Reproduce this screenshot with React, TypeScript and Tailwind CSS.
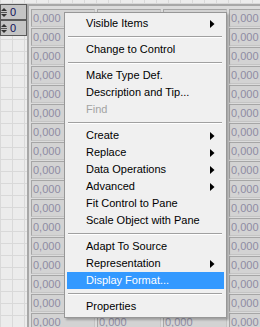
import React from "react";

type Item =
  | { kind: "item"; label: string; sub?: boolean; disabled?: boolean; active?: boolean }
  | { kind: "sep" };

const menu: Item[] = [
  { kind: "item", label: "Visible Items", sub: true },
  { kind: "sep" },
  { kind: "item", label: "Change to Control" },
  { kind: "sep" },
  { kind: "item", label: "Make Type Def." },
  { kind: "item", label: "Description and Tip..." },
  { kind: "item", label: "Find", disabled: true },
  { kind: "sep" },
  { kind: "item", label: "Create", sub: true },
  { kind: "item", label: "Replace", sub: true },
  { kind: "item", label: "Data Operations", sub: true },
  { kind: "item", label: "Advanced", sub: true },
  { kind: "item", label: "Fit Control to Pane" },
  { kind: "item", label: "Scale Object with Pane" },
  { kind: "sep" },
  { kind: "item", label: "Adapt To Source" },
  { kind: "item", label: "Representation", sub: true },
  { kind: "item", label: "Display Format...", active: true },
  { kind: "sep" },
  { kind: "item", label: "Properties" },
];

const rows = Array.from({ length: 17 }, (_, i) => i);
const cols = [0, 1, 2, 3];

// cells fully covered by the open menu don't need their value drawn
const covered = (r: number, c: number) => (c === 1 || c === 2) && r > 0 && r < 16;

const IndexBox: React.FC = () => (
  <div className="relative h-[16px] w-[27px] border border-[#5a5a5a] bg-[#c4c4c4]">
    {/* increment arrows, cut by the window edge */}
    <svg className="absolute left-0 top-[2px]" width="6" height="11" viewBox="0 0 6 11">
      <path d="M0 4 L3 1 L6 4 Z" fill="#333" />
      <path d="M0 7 L3 10 L6 7 Z" fill="#333" />
      <path d="M0 5.5 H6" stroke="#555" strokeWidth="1" />
    </svg>
    <span className="absolute left-[9px] top-[1px] text-[11px] leading-[13px] text-[#10105a]">0</span>
  </div>
);

const Arrow: React.FC<{ color: string }> = ({ color }) => (
  <svg width="5" height="8" viewBox="0 0 5 8">
    <path d="M0 0 L4.5 4 L0 8 Z" fill={color} />
  </svg>
);

export default function App() {
  return (
    <div
      className="relative h-[327px] w-[260px] overflow-hidden bg-[#ececec] bg-[linear-gradient(to_right,#d9d9d9_1px,transparent_1px),linear-gradient(to_bottom,#d9d9d9_1px,transparent_1px)] bg-[size:12px_12px] bg-[position:0px_3px]"
      style={{ fontFamily: '"Liberation Sans", Arial, sans-serif' }}
    >
      <div className="flex pt-[4px]">
        {/* Index display */}
        <div className="flex w-[27px] flex-col">
          <IndexBox />
          <IndexBox />
        </div>

        {/* Array frame */}
        <div className="flex-1 border-l-2 border-t-2 border-[#a8a8a8] bg-[#dcdcdc] pl-[2px] pt-[3px]">
          <div className="grid grid-cols-[repeat(4,66px)] gap-y-[1px]">
            {rows.map((r) =>
              cols.map((c) => (
                <div
                  key={`${r}-${c}`}
                  className="h-[18px] w-[64px] border border-t-[#a6a6a6] border-l-[#a6a6a6] border-r-[#c4c4c4] border-b-[#c4c4c4] bg-[#d3d3d3] pl-[1px] text-[11px] leading-[16px] text-[#8f8ca3]"
                >
                  {covered(r, c) ? null : "0,000"}
                </div>
              ))
            )}
          </div>
        </div>
      </div>

      {/* Context menu */}
      <div className="absolute left-[64px] top-[12px] w-[163px] border border-[#979797] bg-[#f0f0f0] p-[2px] shadow-[2px_2px_2px_rgba(0,0,0,0.25)]">
        {menu.map((it, i) =>
          it.kind === "sep" ? (
            <div key={i} className="flex h-[9px] items-center pl-[1px] pr-[2px]">
              <div className="box-content h-[1px] w-full border-b border-[#ffffff] bg-[#a0a0a0]" />
            </div>
          ) : (
            <div
              key={i}
              className={`flex h-[17px] items-center justify-between pl-[19px] pr-[9px] text-[11px] ${
                it.active
                  ? "bg-[#3399ff] text-white"
                  : it.disabled
                  ? "text-[#a3a3a3]"
                  : "text-black"
              }`}
            >
              <span>{it.label}</span>
              {it.sub && <Arrow color={it.active ? "#fff" : "#000"} />}
            </div>
          )
        )}
      </div>
    </div>
  );
}
